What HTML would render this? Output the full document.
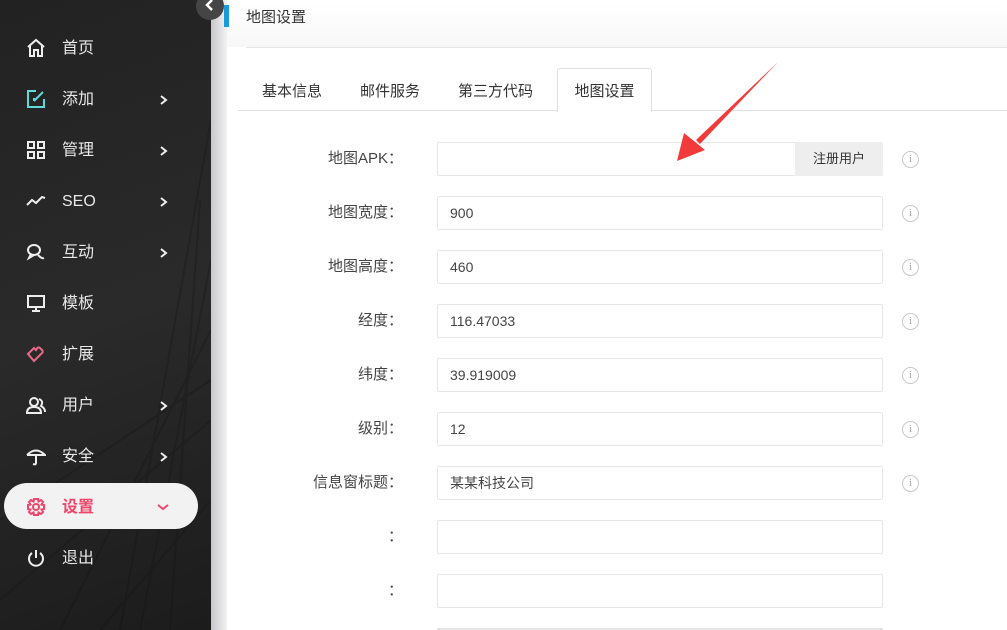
<!DOCTYPE html>
<html><head><meta charset="utf-8"><style>
*{margin:0;padding:0;box-sizing:border-box}
html,body{width:1007px;height:630px;overflow:hidden}
body{position:relative;background:#fff;font-family:"Liberation Sans","Noto Sans CJK SC",sans-serif;color:#333}
#side{position:absolute;left:0;top:0;width:211px;height:630px;background:linear-gradient(160deg,#222 0%,#2a2a2a 50%,#1c1c1c 100%);overflow:hidden}
#shadow{position:absolute;left:211px;top:0;width:16px;height:630px;background:linear-gradient(90deg,#c8c8cc,#f2f2f2)}
.item{position:absolute;left:0;width:211px;height:40px;color:#e8e8e8;font-size:16px}
.item .t{position:absolute;left:62px;top:11px;line-height:22px;height:22px}
.item svg.i{position:absolute;left:26px;top:11px}
.item .ar{position:absolute;left:159px;top:14px}
.act{position:absolute;left:4px;top:483px;width:194px;height:46px;border-radius:23px;background:#f2f2f2}
#main{position:absolute;left:227px;top:0;right:0;height:630px;background:#fff;overflow:hidden}
.lbl{position:absolute;width:170px;left:233px;text-align:right;font-size:15px;color:#444;line-height:20px}
.inp{position:absolute;left:437px;width:446px;height:34px;border:1px solid #e6e6e6;border-radius:2px;font-size:14px;color:#444;padding:0 12px;line-height:32px}
.info{position:absolute;left:902px;width:17px;height:17px;border:1.5px solid #c8c8c8;border-radius:50%;color:#aaa;font-size:11px;text-align:center;line-height:14px;font-family:"Liberation Serif",serif}
.tab{position:absolute;top:82px;font-size:15px;color:#333;line-height:20px}
</style></head><body>
<div id="side">
<svg width="211" height="630" style="position:absolute;left:0;top:0" stroke="#141414" stroke-width="2" fill="none" opacity=".3">
<path d="M120 630 L211 120 M140 630 L211 260 M60 630 L211 330 M0 600 L211 420 M100 630 L211 500 M170 630 L200 200 M0 520 L211 380"/>
</svg>
<div class="act"></div>
<div class="item" style="top:27px"><svg class="i" width="20" height="20" viewBox="0 0 20 20" fill="none" stroke="#eee" stroke-width="2"><path d="M2 9L10 2L18 9M4 8V18H8V12H12V18H16V8"/></svg><span class="t">首页</span></div>
<div class="item" style="top:78px"><svg class="i" width="20" height="20" viewBox="0 0 20 20" fill="none" stroke="#5fd9d9" stroke-width="2"><path d="M10 2H2V18H18V10M8 12L17 3M8 12V9"/></svg><span class="t">添加</span><svg class="ar" width="10" height="16" viewBox="0 0 10 16"><path d="M2 4L7 8L2 12" stroke="#eee" stroke-width="2" fill="none"/></svg></div>
<div class="item" style="top:129px"><svg class="i" width="20" height="20" viewBox="0 0 20 20" fill="none" stroke="#eee" stroke-width="2"><rect x="2" y="2" width="6" height="6"/><rect x="12" y="2" width="6" height="6"/><rect x="2" y="12" width="6" height="6"/><rect x="12" y="12" width="6" height="6"/></svg><span class="t">管理</span><svg class="ar" width="10" height="16" viewBox="0 0 10 16"><path d="M2 4L7 8L2 12" stroke="#eee" stroke-width="2" fill="none"/></svg></div>
<div class="item" style="top:180px"><svg class="i" width="20" height="20" viewBox="0 0 20 20" fill="none" stroke="#eee" stroke-width="2"><path d="M1 14L6 9L10 12L16 6L19 7"/></svg><span class="t">SEO</span><svg class="ar" width="10" height="16" viewBox="0 0 10 16"><path d="M2 4L7 8L2 12" stroke="#eee" stroke-width="2" fill="none"/></svg></div>
<div class="item" style="top:231px"><svg class="i" width="20" height="20" viewBox="0 0 20 20" fill="none" stroke="#eee" stroke-width="2"><ellipse cx="8" cy="8" rx="6" ry="5"/><path d="M5 12L3 16L8 13M12 13Q16 17 18 16"/></svg><span class="t">互动</span><svg class="ar" width="10" height="16" viewBox="0 0 10 16"><path d="M2 4L7 8L2 12" stroke="#eee" stroke-width="2" fill="none"/></svg></div>
<div class="item" style="top:282px"><svg class="i" width="20" height="20" viewBox="0 0 20 20" fill="none" stroke="#eee" stroke-width="2"><rect x="2" y="3" width="16" height="11"/><path d="M10 14V18M6 18H14"/></svg><span class="t">模板</span></div>
<div class="item" style="top:333px"><svg class="i" width="20" height="20" viewBox="0 0 20 20" fill="none" stroke="#e86a8a" stroke-width="2"><path d="M2 10L8 4L10 6Q12 2 14 4L16 6Q18 8 15 10L8 17Z"/></svg><span class="t">扩展</span></div>
<div class="item" style="top:384px"><svg class="i" width="20" height="20" viewBox="0 0 20 20" fill="none" stroke="#eee" stroke-width="2"><circle cx="8" cy="7" r="4"/><path d="M1 18Q1 12 8 12Q15 12 15 18ZM13 4Q18 6 15 11Q19 13 19 17"/></svg><span class="t">用户</span><svg class="ar" width="10" height="16" viewBox="0 0 10 16"><path d="M2 4L7 8L2 12" stroke="#eee" stroke-width="2" fill="none"/></svg></div>
<div class="item" style="top:435px"><svg class="i" width="20" height="20" viewBox="0 0 20 20" fill="none" stroke="#eee" stroke-width="2"><path d="M1 9Q10 0 19 9H1M10 9V17Q10 19 7 18"/></svg><span class="t">安全</span><svg class="ar" width="10" height="16" viewBox="0 0 10 16"><path d="M2 4L7 8L2 12" stroke="#eee" stroke-width="2" fill="none"/></svg></div>
<div class="item" style="top:486px;color:#f0456a;font-weight:bold"><svg class="i" width="20" height="20" viewBox="0 0 20 20" fill="none" stroke="#f0456a" stroke-width="2"><circle cx="10" cy="10" r="3"/><path d="M8 2H12L12.5 4.5L15 3L17 5L15.5 7.5L18 8V12L15.5 12.5L17 15L15 17L12.5 15.5L12 18H8L7.5 15.5L5 17L3 15L4.5 12.5L2 12V8L4.5 7.5L3 5L5 3L7.5 4.5Z"/></svg><span class="t">设置</span><svg class="ar" width="14" height="16" viewBox="0 0 14 16" style="left:156px;top:14px"><path d="M2 5L7 9L12 5" stroke="#f0456a" stroke-width="2" fill="none"/></svg></div>
<div class="item" style="top:537px"><svg class="i" width="20" height="20" viewBox="0 0 20 20" fill="none" stroke="#eee" stroke-width="2"><path d="M6 5A7 7 0 1 0 14 5M10 2V10"/></svg><span class="t">退出</span></div>
</div>
<div id="shadow"></div>
<div id="main">
<div style="position:absolute;left:0;top:5px;right:0;height:42px;background:linear-gradient(#fff,#f7f7f7)"></div>
<div style="position:absolute;left:19px;top:6px;font-size:15px;color:#333">地图设置</div>
<div style="position:absolute;left:19px;top:47px;right:0;height:1px;background:#e6e6e6"></div>
<div style="position:absolute;left:11px;top:110px;right:0;height:1px;background:#e0e0e0"></div>
</div>
<div style="position:absolute;left:224px;top:5px;width:5px;height:22px;background:#1a9bd7"></div>
<div style="position:absolute;left:196px;top:-8px;width:28px;height:28px;border-radius:50%;background:#454545"><svg width="28" height="28" viewBox="0 0 28 28"><path d="M16 8L11 13L16 18" stroke="#fff" stroke-width="2.5" fill="none"/></svg></div>
<div class="tab" style="left:262px">基本信息</div>
<div class="tab" style="left:360px">邮件服务</div>
<div class="tab" style="left:458px">第三方代码</div>
<div style="position:absolute;left:557px;top:68px;width:95px;height:44px;border:1px solid #e0e0e0;border-bottom:none;background:#fff;border-radius:3px 3px 0 0;font-size:15px;padding-top:13px;text-align:center;line-height:20px">地图设置</div>

<div class="lbl" style="top:149px">地图APK：</div>
<div class="inp" style="top:142px"></div>
<div style="position:absolute;left:795px;top:142px;width:88px;height:34px;background:#eee;border-radius:0 2px 2px 0;font-size:13px;text-align:center;line-height:34px">注册用户</div>
<div class="info" style="top:151px">i</div>

<div class="lbl" style="top:203px">地图宽度：</div><div class="inp" style="top:196px">900</div><div class="info" style="top:205px">i</div>
<div class="lbl" style="top:257px">地图高度：</div><div class="inp" style="top:250px">460</div><div class="info" style="top:259px">i</div>
<div class="lbl" style="top:311px">经度：</div><div class="inp" style="top:304px">116.47033</div><div class="info" style="top:313px">i</div>
<div class="lbl" style="top:365px">纬度：</div><div class="inp" style="top:358px">39.919009</div><div class="info" style="top:367px">i</div>
<div class="lbl" style="top:419px">级别：</div><div class="inp" style="top:412px">12</div><div class="info" style="top:421px">i</div>
<div class="lbl" style="top:473px">信息窗标题：</div><div class="inp" style="top:466px">某某科技公司</div><div class="info" style="top:475px">i</div>
<div class="lbl" style="top:527px">：</div><div class="inp" style="top:520px"></div>
<div class="lbl" style="top:581px">：</div><div class="inp" style="top:574px"></div>
<div class="inp" style="top:628px;height:2px"></div>

<svg width="1007" height="630" style="position:absolute;left:0;top:0;pointer-events:none"><path d="M778 62L696 140L700 144Z" fill="#f23a3a"/><path d="M677 161L684 133L705 150Z" fill="#f23a3a"/></svg>
</body></html>
